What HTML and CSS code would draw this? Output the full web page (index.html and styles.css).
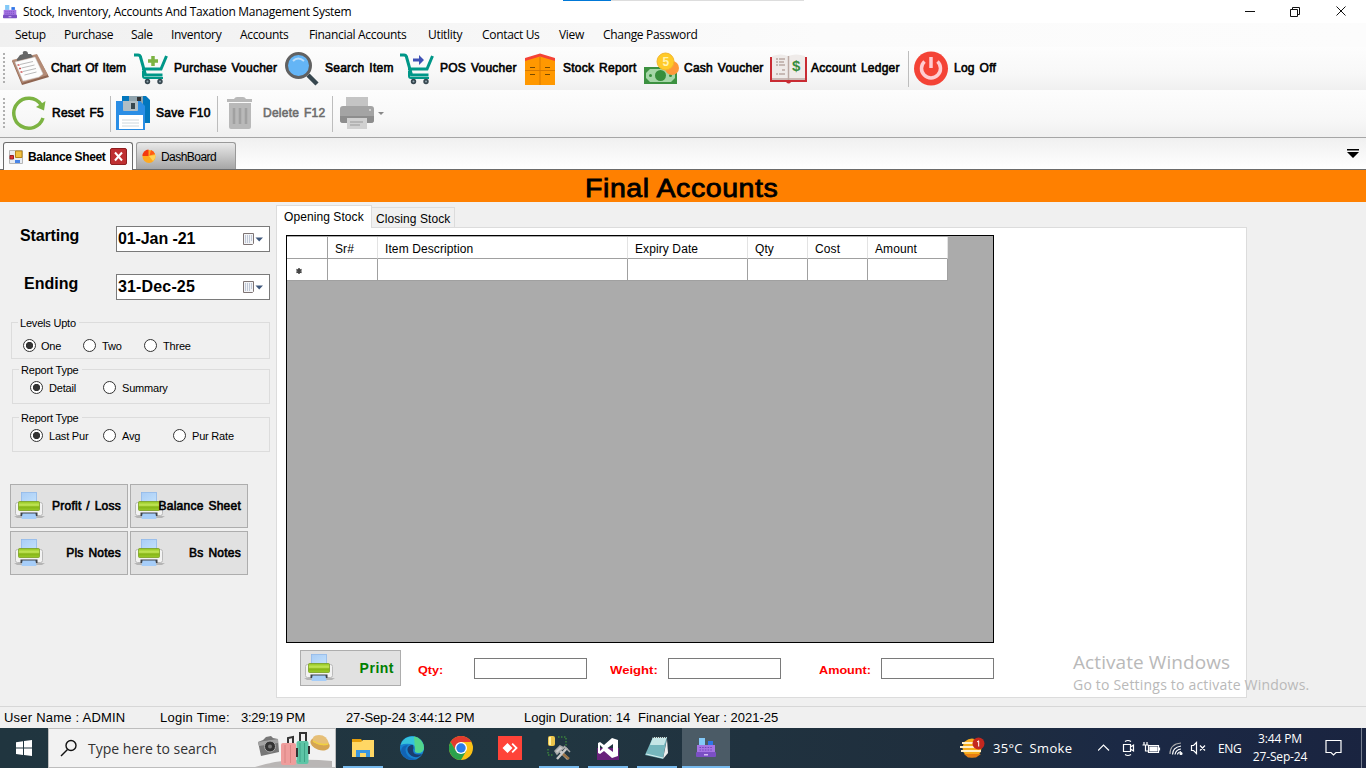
FILE: index.html
```html
<!DOCTYPE html>
<html lang="en">
<head>
<meta charset="utf-8">
<title>Stock, Inventory, Accounts And Taxation Management System</title>
<link rel="stylesheet" href="styles.css">
</head>
<body>
<svg class="sprite" width="0" height="0">
  <defs>
    <linearGradient id="lime" x1="0" y1="0" x2="0" y2="1"><stop offset="0" stop-color="#8fc31c"/><stop offset=".4" stop-color="#c5e85a"/><stop offset=".6" stop-color="#86b516"/><stop offset="1" stop-color="#9acb2a"/></linearGradient>
    <linearGradient id="sheet" x1="0" y1="0" x2="1" y2="1"><stop offset="0" stop-color="#a9cdf6"/><stop offset="1" stop-color="#c2e0fb"/></linearGradient>
  </defs>
  <symbol id="printer" viewBox="0 0 32 30">
    <path d="M0 25h31l-3 2H3z" fill="#b5b5b5"/>
    <rect x="1.500" y="11.500" width="27" height="13" rx="2" fill="#f2f2f2" stroke="#b4b4b4" stroke-width=".9"/>
    <rect x="7.500" y="1.500" width="15" height="10" fill="url(#sheet)" stroke="#8fb8ea" stroke-width=".8"/>
    <rect x="4.500" y="10.500" width="21" height="9" rx="1" fill="url(#lime)" stroke="#7a9e1f" stroke-width=".8"/>
    <rect x="6.500" y="21.500" width="17" height="3.500" fill="#3e4248"/>
    <path d="M8.500 22.500h13l1 5.500h-15z" fill="#a6cdf8"/>
  </symbol>
  <symbol id="cart" viewBox="0 0 36 36">
    <path d="M1 4h4q2 0 2.500 2l5 18h17M9 18h19L33.500 5" fill="none" stroke="#009788" stroke-width="3"/>
    <path d="M10 20v5q0 2 2 2h18" fill="none" stroke="#009788" stroke-width="2"/>
    <circle cx="14.500" cy="30.500" r="2.700" fill="#37474f"/><circle cx="27" cy="30.500" r="2.700" fill="#37474f"/>
    <circle cx="14.500" cy="30.500" r="1" fill="#90a4ae"/><circle cx="27" cy="30.500" r="1" fill="#90a4ae"/>
  </symbol>
  <symbol id="register" viewBox="0 0 20 20">
    <rect x="3" y="0" width="6" height="7" fill="#83c9f8"/><rect x="12" y="3" width="5" height="4" fill="#2f76e8"/>
    <path d="M1 7h18v8H1z" fill="#a575e3"/><rect x="0" y="14" width="20" height="5" rx="1" fill="#7b4fc4"/>
    <path d="M3.500 9.500h13M3.500 12h13" stroke="#7344bd" stroke-dasharray="1.500 1.200"/><rect x="8" y="16" width="4" height="1.500" fill="#d3bdf2"/>
  </symbol>
  <symbol id="cal" viewBox="0 0 22 14">
    <path d="M.5.500h10v10l-1 1h-9z" fill="#f3f4f6" stroke="#7e7474"/><path d="M2 3h7M2 5h7M2 7h7M2 9h6" stroke="#8d9cb8" stroke-dasharray="1 1"/><path d="M12.500 4.500h7.500L16.200 8.500z" fill="#40587c"/>
  </symbol>
</svg>

<header class="titlebar">
  <svg class="app-icon" width="14" height="14"><use href="#register"/></svg>
  <span class="app-title">Stock, Inventory, Accounts And Taxation Management System</span>
  <i class="loading"></i>
  <svg class="win-buttons" width="110" height="22" viewBox="0 0 110 22" fill="none" stroke="#111"><path d="M2 10.500h10M47.500 8.500h7v7h-7zM49.500 8.500v-2h7v7h-2M93.500 5.500l9 9M102.500 5.500l-9 9"/></svg>
</header>

<nav class="menu">
  <span class="m1">Setup</span><span class="m2">Purchase</span><span class="m3">Sale</span><span class="m4">Inventory</span><span class="m5">Accounts</span><span class="m6">Financial Accounts</span><span class="m7">Utitlity</span><span class="m8">Contact Us</span><span class="m9">View</span><span class="m10">Change Password</span>
</nav>

<div class="toolbar tools-main">
  <i class="grip"></i>
  <svg class="flush" width="38" height="37" viewBox="0 0 38 37"><path d="M1 11L26 5l12 22-27 8z" fill="#8f6551"/><path d="M1 10L26 4l11 21-26 8z" fill="#b38a75"/><path d="M4 12L24 7l8 17-4 3-16 4z" fill="#fdfdfd" stroke="#ccc" stroke-width=".5"/><path d="M9 14.500l13-3M10.500 18l13-3M12 21.500l13-3M13.500 25l12-3" stroke="#bbb"/><path d="M6.500 15h2M8 18.500h2M9.500 22h2" stroke="#c55" stroke-width="1.500"/><path d="M6 9l3-4 3-1q-1-3 2-3t3 3l3 0 2 3-16 4z" fill="#666"/></svg>
  <span class="t1">Chart Of Item</span>
  <svg width="36" height="36"><use href="#cart"/><path d="M20 5v10M15 10h10" stroke="#7cb342" stroke-width="3.500"/></svg>
  <span class="t2">Purchase Voucher</span>
  <svg width="36" height="36" viewBox="0 0 36 36"><path d="M24 24l9 9" stroke="#37474f" stroke-width="4.500"/><circle cx="14.500" cy="14.500" r="12" fill="#64b5f6" stroke="#616161" stroke-width="3"/><path d="M9 10q5-5 11 0" stroke="#bbdefb" stroke-width="2" fill="none"/></svg>
  <span class="t3">Search Item</span>
  <svg width="36" height="36"><use href="#cart"/><path d="M14 7.500h6V4l5 5-5 5v-3.500h-6z" fill="#3f51b5"/></svg>
  <span class="t4">POS Voucher</span>
  <svg class="flush" width="36" height="36" viewBox="0 0 36 36"><path d="M1 9L16 4l15 5v25H1z" fill="#ff9800"/><path d="M1 10V7L16 2.500 31 7v3L16 5.500z" fill="#f44336"/><path d="M1 19.500h30M16 6v28" stroke="#d77900"/><path d="M6 16.500h5M21 16.500h5M6 23.500h5M21 23.500h5" stroke="#7a4b00"/></svg>
  <span class="t5">Stock Report</span>
  <svg width="36" height="36" viewBox="0 0 36 36"><rect x="1" y="16" width="33" height="17" fill="#3c9140"/><path d="M7 18h21l4 4v5l-4 4H7l-4-4v-5z" fill="#a5d6a7"/><circle cx="17.500" cy="24.500" r="5.500" fill="#388e3c"/><circle cx="7.500" cy="24.500" r="1.500" fill="#388e3c"/><circle cx="27.500" cy="24.500" r="1.500" fill="#388e3c"/><circle cx="29" cy="17" r="7" fill="#ff9838"/><circle cx="22.500" cy="10.500" r="8.500" fill="#ffca28" stroke="#f3b52b"/><text x="19.500" y="15" class="coin">5</text></svg>
  <span class="t6">Cash Voucher</span>
  <svg class="flush" width="38" height="36" viewBox="0 0 38 36"><path d="M0 6h37v25H21q-2 3-5 0H0z" fill="#c92b33"/><path d="M2 5q9-3 16 0 8-3 17 0v24H2z" fill="#efebe9"/><path d="M18.500 5v24" stroke="#bcaaa4" stroke-width="1.500"/><path d="M2 28h33" fill="none" stroke="#bcaaa4" stroke-width="1.500"/><path d="M6 8h2m1 0h6M6 11h2m1 0h5M6 14h2m1 0h6M12 19h3M6 23h2m1 0h6" stroke="#bba9a3" stroke-width="1.300"/><text x="22" y="20" class="dollar">$</text></svg>
  <span class="t7">Account Ledger</span>
  <i class="sep"></i>
  <svg class="flush" width="36" height="36" viewBox="0 0 36 36"><circle cx="17" cy="17.500" r="17" fill="#f44336"/><path d="M10.500 10.500a9.500 9.500 0 1 0 13 0M17 6v11" stroke="#ffcdd2" stroke-width="3.500" fill="none"/></svg>
  <span class="t8">Log Off</span>
</div>

<div class="toolbar tools-edit">
  <i class="grip"></i>
  <svg width="36" height="36" viewBox="0 0 36 36"><path d="M32 23A15 15 0 1 1 30 9.500" fill="none" stroke="#7cb342" stroke-width="3.500"/><path d="M34.500 6L33 15.500 25 12z" fill="#7cb342"/></svg>
  <span class="e1">Reset F5</span>
  <i class="sep"></i>
  <svg width="36" height="36" viewBox="0 0 36 36"><path d="M7 1h24l4 4v23H7z" fill="#0277bd"/><path d="M14 1h14v8H14z" fill="#90a4ae"/><path d="M22 2h4v4h-4z" fill="#333"/><path d="M1 6h24l5 5v24H1z" fill="#2b8ee5"/><path d="M8 6h15v9q0 1-1 1H9q-1 0-1-1z" fill="#b0bec5"/><path d="M16 8h4v6h-4z" fill="#37474f"/><path d="M4 20h24v14H4z" fill="#fff"/><path d="M7 25h17M7 28h17M7 31h17" stroke="#cfd8dc"/></svg>
  <span class="e2">Save F10</span>
  <i class="sep"></i>
  <svg width="36" height="36" viewBox="0 0 36 36" fill="#b9b9b9"><path d="M2 4h7q1-2 3-2h6q2 0 3 2h6v3H2zM4 8h22v24q0 2-2 2H6q-2 0-2-2z"/><path d="M9 13v16M15 13v16M21 13v16" stroke="#a1a1a1" stroke-width="2.500"/></svg>
  <span class="e3">Delete F12</span>
  <i class="sep"></i>
  <svg width="36" height="36" viewBox="0 0 36 36"><path d="M7 2h22v13H7z" fill="#c4c4c4"/><rect x="1" y="11" width="34" height="17" rx="3" fill="#a4a4a4"/><path d="M1 21h34v4q0 3-3 3H4q-3 0-3-3z" fill="#8d8d8d"/><path d="M8 23h20v11H8z" fill="#d1d1d1"/><path d="M11 27h13M11 30h10" stroke="#999"/><circle cx="31" cy="15" r="1" fill="#ddd"/></svg>
  <svg width="8" height="8" viewBox="0 0 8 8"><path d="M1 3h6L4 6z" fill="#888"/></svg>
</div>

<div class="doc-tabs">
  <div class="doc-tab current">
    <svg width="14" height="14" viewBox="0 0 14 14"><path d="M.5.500h13v13H.5z" fill="#e8ecf2" stroke="#b7b7b7"/><path d="M6.500 1h6.500v6.500H6.500z" fill="#f0c040" stroke="#b78316"/><path d="M1 5.500h3.500V9H1z" fill="#d33" stroke="#922"/><path d="M6 10h5v3H6z" fill="#4a86e8"/></svg>
    <span class="d1">Balance Sheet</span>
    <svg width="17" height="17" viewBox="0 0 17 17"><rect x=".5" y=".5" width="16" height="16" rx="1.500" fill="#bf2f31" stroke="#8d1e20"/><path d="M5 4.500l7 8M12 4.500l-7 8" stroke="#fff" stroke-width="2"/></svg>
  </div>
  <div class="doc-tab">
    <svg width="14" height="14" viewBox="0 0 14 14"><circle cx="7" cy="7.500" r="6.500" fill="#ffa91f"/><path d="M6.500 7V.5a6.500 6.500 0 0 0-6 6.500z" fill="#f4380f"/><path d="M7.500 6.500L9 1a6 6 0 0 1 4 4z" fill="#ff5a16"/><path d="M7 7l6.500-1a7 7 0 0 1-2.500 6z" fill="#ffd25a"/></svg>
    <span class="d2">DashBoard</span>
  </div>
  <svg class="tab-list" width="12" height="9" viewBox="0 0 12 9"><path d="M0 0h12v1.500H0zM0 3h12L6 9z"/></svg>
</div>

<h1 class="banner"><span>Final Accounts</span></h1>

<main class="work">
  <aside class="side">
    <div class="date-row"><b class="s1">Starting</b><div class="date"><span class="s3">01-Jan -21</span><svg width="22" height="14"><use href="#cal"/></svg></div></div>
    <div class="date-row second"><b class="s2">Ending</b><div class="date"><span class="s4">31-Dec-25</span><svg width="22" height="14"><use href="#cal"/></svg></div></div>
    <fieldset class="levels"><legend>Levels Upto</legend><i class="radio on"></i><span>One</span><i class="radio"></i><span>Two</span><i class="radio"></i><span>Three</span></fieldset>
    <fieldset class="kind"><legend>Report Type</legend><i class="radio on"></i><span>Detail</span><i class="radio"></i><span>Summary</span></fieldset>
    <fieldset class="kind rate"><legend>Report Type</legend><i class="radio on"></i><span>Last Pur</span><i class="radio"></i><span>Avg</span><i class="radio"></i><span>Pur Rate</span></fieldset>
    <div class="reports">
      <div class="btn"><svg width="32" height="30"><use href="#printer"/></svg><span class="b1">Profit / Loss</span></div>
      <div class="btn"><svg width="32" height="30"><use href="#printer"/></svg><span class="b2">Balance Sheet</span></div>
      <div class="btn"><svg width="32" height="30"><use href="#printer"/></svg><span class="b3">Pls Notes</span></div>
      <div class="btn"><svg width="32" height="30"><use href="#printer"/></svg><span class="b4">Bs Notes</span></div>
    </div>
  </aside>
  <section class="stock">
    <div class="tabs"><div class="tab active"><span class="p1">Opening Stock</span></div><div class="tab"><span class="p2">Closing Stock</span></div></div>
    <div class="page">
      <div class="sheet">
        <div class="row head"><span></span><span>Sr#</span><span>Item Description</span><span>Expiry Date</span><span>Qty</span><span>Cost</span><span>Amount</span></div>
        <div class="row"><span><svg width="8" height="8" viewBox="0 0 8 8"><path d="M4 1v6M1.400 2.500l5.200 3M6.600 2.500l-5.200 3" stroke="#444" stroke-width="1.500"/></svg></span><span></span><span></span><span></span><span></span><span></span><span></span></div>
      </div>
      <div class="totals">
        <div class="print"><svg width="32" height="30"><use href="#printer"/></svg><span class="q0">Print</span></div>
        <label class="q1">Qty:</label><i class="box"></i>
        <label class="q2">Weight:</label><i class="box"></i>
        <label class="q3">Amount:</label><i class="box"></i>
      </div>
    </div>
  </section>
  <div class="watermark"><p class="w1">Activate Windows</p><p class="w2">Go to Settings to activate Windows.</p></div>
</main>

<footer class="status">
  <span class="f1">User Name : ADMIN</span><span class="f2">Login Time:</span><span class="f3">3:29:19 PM</span><span class="f4">27-Sep-24 3:44:12 PM</span><span class="f5">Login Duration: 14</span><span class="f6">Financial Year : 2021-25</span>
</footer>

<div class="taskbar">
  <div class="start"><svg width="16" height="16" viewBox="0 0 16 16"><path d="M0 2.200l7-1V7.600H0zM8 1l8-1v7.600H8zM0 8.600h7V15l-7-1zM8 8.600h8V16l-8-1.100z" fill="#fff"/></svg></div>
  <div class="search">
    <svg width="18" height="18" viewBox="0 0 18 18" fill="none" stroke="#111" stroke-width="1.400"><circle cx="11" cy="6.500" r="5"/><path d="M7.500 10.500L1 17"/></svg>
    <span class="k1">Type here to search</span>
    <svg class="travel" width="80" height="38" viewBox="0 0 80 38"><path d="M0 38q30-10 77-6v6z" fill="#b9b6b5"/><path d="M3 13l5-2 3-3 5-1 2 2 5 1 1 13-18 4z" fill="#777"/><path d="M3 13l20-3v4L4 17z" fill="#a3a3a3"/><circle cx="15" cy="17.500" r="5.500" fill="#333" stroke="#aaa"/><circle cx="15" cy="17.500" r="2" fill="#777"/><path d="M33 14V9l5-1v6M45 12V4h6v9" fill="none" stroke="#333" stroke-width="2"/><rect x="26" y="14" width="15" height="22" rx="2" fill="#ef9d9c"/><path d="M30 16v18M35.500 16v18" stroke="#d98482"/><rect x="41.500" y="12" width="12" height="23" rx="2" fill="#5dc5a6"/><path d="M45 14v19M49.500 14v19" stroke="#3ea487"/><path d="M42 19v9M54 17v8" stroke="#333" stroke-width="2"/><ellipse cx="65" cy="15" rx="10" ry="6" fill="#d5a552" transform="rotate(18 65 15)"/><path d="M58 13q-2-7 6-7t10 9q-7 3-16-2z" fill="#e6bf77"/><path d="M58 12q7 5 15 3" fill="none" stroke="#f1d13f" stroke-width="1.500"/></svg>
  </div>
  <div class="apps">
    <div class="app run"><svg width="24" height="24" viewBox="0 0 24 24"><path d="M1 3h9l2 3h-11z" fill="#e59f0c"/><path d="M1 6h9l2-2h11v17H1z" fill="#ffd764"/><path d="M5 21v-7h14v7h-4v-4H9v4z" fill="#3b97e0"/></svg></div>
    <div class="app"><svg width="24" height="24" viewBox="0 0 24 24"><circle cx="12" cy="12" r="12" fill="#1681cf"/><path d="M.5 9A12 12 0 0 1 24 12q0 5-6 5-4 0-3-3 1-5-4-6-6-1-10.500 1z" fill="#35c3dc"/><path d="M14 .3A12 12 0 0 1 24 12q-1 5-6 5-4-1-3-3z" fill="#5edb72" opacity=".75"/><path d="M8 9q-5 5 0 11 3 3 9 3A12 12 0 0 1 1 16Q1 9 8 9z" fill="#1263b4"/><path d="M11 9q-5 2-3 7 3 6 10 5 3-1 4-3-9 2-9-4 1-2 0-5z" fill="#1a3d70"/></svg></div>
    <div class="app"><svg width="24" height="24" viewBox="0 0 24 24"><circle cx="12" cy="12" r="12" fill="#fbc116"/><path d="M1.600 6A12 12 0 0 1 22.400 6H12L7 15z" fill="#e33b2e"/><path d="M1.600 6A12 12 0 0 0 12 24l5.200-9H7z" fill="#2ba24c"/><circle cx="12" cy="12" r="6" fill="#fff"/><circle cx="12" cy="12" r="4.700" fill="#2b7de9"/></svg></div>
    <div class="app"><svg width="24" height="24" viewBox="0 0 24 24"><path d="M0 0h24v24H0z" fill="#ff4338"/><path d="M9.500 7l5 5-5 5-5-5zM13.500 8.300l1.300-1.300 5 5-5 5-1.300-1.300 3.700-3.700z" fill="#fff"/></svg></div>
    <div class="app run"><svg width="24" height="24" viewBox="0 0 24 24"><rect x="1" y="0" width="7" height="10" rx="2" fill="#edc54b"/><path d="M2 1h2v8H2z" fill="#fff2a6"/><path d="M11 1h8v9M1 13v6h6" fill="none" stroke="#48a939" stroke-dasharray="1.500 1.500"/><path d="M10 23L20 12M11 13l10 10" stroke="#c8c8c8" stroke-width="2.500"/><path d="M8 15l5-5 4 2-4 3-3 3zM17 10l6 6" stroke="#aaa" fill="#ccc" stroke-width="1.500"/><path d="M16 18l6 5" stroke="#9a7448" stroke-width="2.500"/></svg></div>
    <div class="app run"><svg width="24" height="24" viewBox="0 0 24 24"><path d="M1 12h22v12H1z" fill="#68217a"/><path d="M16 2l6 2v16l-6 2-8-7-4 3-2-1V7l2-1 4 3zM17 8l-5.500 4 5.500 4zM4 9v6l3-3z" fill="#fff" fill-rule="evenodd"/></svg></div>
    <div class="app run"><svg width="24" height="24" viewBox="0 0 24 24"><path d="M8 1h14l-4 22-18-4z" fill="#76b6bd"/><path d="M8 1h14l-3 8H5z" fill="#c6e5e6"/><path d="M22 3l1 14-5 6z" fill="#eee"/><path d="M1 18l17 4" stroke="#d8eef0"/><path d="M8 1.500h14" stroke="#555" stroke-dasharray="1 1"/></svg></div>
    <div class="app active run"><svg width="20" height="20"><use href="#register"/></svg></div>
  </div>
  <div class="tray">
    <svg width="26" height="22" viewBox="0 0 26 22"><circle cx="12" cy="11" r="9.500" fill="#f6ad1d"/><path d="M2 6h16M0 10h18M1 14h20" stroke="#fff0c7" stroke-width="2"/><path d="M4 17h17l-5 3.500H8z" fill="#e67d12"/><circle cx="18.500" cy="6.500" r="6" fill="#c4281f"/><path d="M17 5l1.700-1.200V9.500" fill="none" stroke="#fff"/></svg>
    <span class="y1">35°C&ensp;Smoke</span>
    <svg width="112" height="22" viewBox="0 0 112 22" fill="none" stroke="#fff" stroke-width="1.200"><path d="M0 13.500L5.500 8l5.500 5.500"/><path d="M25.500 7.500h7v7h-7zM32.500 10l3-2v6l-3-2M27 4.500q3-2 6 0M27 17.500q3 2 6 0"/><path d="M50.500 8.500h10v7h-10zM61.500 10.500v3M46 5v3M49 5v3M44.500 8h6M47.500 8v6h3"/><path d="M52 10h7v4h-7z" fill="#fff"/><path d="M72 17q0-10 11-11" stroke="#aaa"/><path d="M74.500 17.500q0-7 8.500-8.500M77 17.500q1-5 6-5.500M79.500 17.500q0-2 3.500-3"/><circle cx="83" cy="16.500" r="1" fill="#fff"/><path d="M93.500 8.500h2l3-3v11l-3-3h-2zM102 8.500l5 5M107 8.500l-5 5"/></svg>
    <span class="y2">ENG</span>
    <div class="clock"><span class="y3">3:44 PM</span><span class="y4">27-Sep-24</span></div>
    <svg width="17" height="18" viewBox="0 0 17 18" fill="none" stroke="#fff" stroke-width="1.200"><path d="M1 1.500h15v12h-5L8.500 16 6 13.500H1z"/></svg>
    <i class="peek"></i>
  </div>
</div>
</body>
</html>
```
FILE: styles.css
```css
* { box-sizing: border-box; }
body { margin: 0; width: 1366px; height: 768px; overflow: hidden; display: flex; flex-direction: column; background: #f0f0f0; color: #000; font-family: "Liberation Sans", sans-serif; }
svg { display: block; flex: none; }
span, label, legend, b { white-space: nowrap; }
.sprite { position: absolute; }

.titlebar { height: 23px; flex: none; background: #fff; display: flex; align-items: center; padding-left: 3px; }
.app-title { width: 540px; margin-left: 6px; font: 12px "Open Sans", sans-serif; letter-spacing: -.28px; }
.loading { width: 241px; height: 1px; align-self: flex-start; background: linear-gradient(90deg, #0078d7 48px, #ddd 48px); }
.win-buttons { margin-left: auto; margin-right: 13px; }

.menu { height: 24px; flex: none; display: flex; align-items: center; padding: 0 0 1px 15px; gap: 19px; background: linear-gradient(90deg, #f0f0f0, #fbfbfb 60%, #fcfcfc); font: 12px "Open Sans", sans-serif; letter-spacing: -.32px; }
.menu span { flex: none; }
.m1 { width: 30px; } .m2 { width: 48px; } .m3 { width: 21px; } .m4 { width: 50px; } .m5 { width: 50px; }
.m6 { width: 100px; } .m7 { width: 35px; } .m8 { width: 58px; } .m9 { width: 25px; } .m10 { width: 94px; }

.toolbar { display: grid; align-items: center; flex: none; font-size: 12px; letter-spacing: .25px; word-spacing: 1.2px; -webkit-text-stroke: .6px currentColor; background: linear-gradient(#fdfdfd, #f8f8f8 60%, #f0f0f0); }
.toolbar span { padding-bottom: 2px; }
.toolbar text { -webkit-text-stroke: 0; }
.t1 { letter-spacing: .05px; }
.tools-main { height: 43px; grid-template-columns: 11px 40px 83px 40px 111px 40px 75px 40px 84px 39px 81px 40px 86px 41px 97px 6px 40px 60px; }
.tools-edit { height: 48px; grid-template-columns: 11px 41px 58px 5px 41px 61px 8px 38px 69px 7px 38px 10px; border-bottom: 1px solid #a6a6a6; }
.tools-main svg { margin-left: -1px; }
.tools-main .flush { margin-left: 0; }
.tools-edit svg { margin-bottom: 1px; }
.grip { width: 2px; height: 32px; margin-left: 3px; background: repeating-linear-gradient(#b0b0b0 0 2px, transparent 2px 4px); }
.sep { width: 1px; height: 36px; background: #bdbdbd; }
.coin { font: bold 12px "Liberation Sans", sans-serif; fill: #fff3b0; }
.dollar { font: bold 15px "Liberation Sans", sans-serif; fill: #388e3c; }
.e3 { color: #6d6d6d; }

.doc-tabs { height: 32px; flex: none; display: flex; align-items: flex-end; gap: 3px; padding-left: 3px; background: linear-gradient(#f0f0f0, #fff); border-bottom: 1px solid #6b6b6b; }
.doc-tab { width: 100px; height: 27px; display: flex; align-items: center; gap: 5px; padding-left: 5px; border: 1px solid #999; border-bottom: 0; border-radius: 3px 3px 0 0; background: linear-gradient(#e9e9e9, #a6a6a6); font-size: 12px; }
.doc-tab.current { width: 130px; height: 28px; margin-bottom: -1px; background: #fcfcfc; border-color: #6b6b6b; font-weight: bold; }
.d1 { width: 77px; letter-spacing: -.35px; }
.d2 { letter-spacing: -.55px; padding-top: 1px; }
.tab-list { margin: 0 7px 11px auto; }

.banner { height: 32px; flex: none; margin: 0; display: flex; align-items: center; padding: 3px 0 0 585px; background: #ff8000; font-size: 25px; font-weight: normal; letter-spacing: .5px; line-height: 30px; -webkit-text-stroke: .8px #000; }
.banner span { transform: scaleX(1.14); transform-origin: 0 50%; }

.work { height: 503px; flex: none; display: flex; position: relative; }
.side { width: 276px; flex: none; padding: 24px 0 0 10px; }
.date-row { height: 26px; display: flex; width: 260px; font-size: 16px; }
.date-row b { width: 106px; height: 21px; line-height: 20px; padding-left: 10px; }
.s1 { letter-spacing: -.15px; }
.second { margin-top: 22px; }
.second b { padding-left: 14px; }
.date { width: 154px; height: 26px; flex: none; display: flex; align-items: center; justify-content: space-between; border: 1px solid #7a7a7a; background: #fff; padding: 0 4px 0 1px; font-weight: bold; }
.s3 { letter-spacing: -.1px; }
.s4 { letter-spacing: .15px; }
.date svg { margin-top: 2px; }
fieldset { margin: 4px 0 0 2px; padding: 0; width: 258px; height: 41px; min-width: 0; border: 1px solid #dcdcdc; display: flex; align-items: center; letter-spacing: -.2px; }
fieldset span, legend { font-size: 11px; }
legend { padding: 1px 3px 0 2px; height: 13px; line-height: 13px; }
fieldset span { padding-left: 6px; }
.levels { margin: 16px 0 0 1px; width: 259px; height: 43px; padding: 4px 0 0 11px; }
.levels legend { margin-left: -5px; }
.levels span { width: 47px; padding-left: 5px; }
.levels span:nth-of-type(n+2) { width: 48px; padding-left: 6px; }
.kind { padding: 0 0 4px 17px; }
.kind legend { margin-left: -11px; }
.kind span { width: 60px; }
.rate { margin-top: 7px; }
.rate span:nth-of-type(2) { width: 57px; }
.radio { width: 13px; height: 13px; flex: none; border: 1px solid #333; border-radius: 50%; background: #fff; }
.radio.on { background: radial-gradient(circle, #333 0 3.300px, #fff 4px); }
.reports { margin-top: 32px; display: grid; grid-template-columns: 118px 118px; gap: 3px 2px; }
.btn, .print { height: 44px; display: flex; align-items: center; justify-content: flex-end; border: 1px solid #adadad; background: #e1e1e1; padding-right: 6px; }
.btn { font-size: 12px; letter-spacing: .25px; word-spacing: 1.200px; -webkit-text-stroke: .6px #000; }
.btn svg { margin-left: 3px; margin-right: auto; }
.b2 { margin-left: -14px; }

.stock { width: 971px; flex: none; padding-top: 4px; }
.tabs { height: 21px; display: flex; align-items: flex-end; font-size: 12px; letter-spacing: .08px; }
.tab { width: 83px; height: 20px; padding: 4px 0 0 4px; border: 1px solid #dcdcdc; border-bottom: 0; border-left: 0; background: #f0f0f0; }
.tab.active { width: 96px; height: 23px; margin-bottom: -1px; padding: 4px 0 0 7px; background: #fff; border-left: 1px solid #dcdcdc; position: relative; z-index: 1; }
.page { height: 471px; border: 1px solid #dcdcdc; background: #fff; padding: 7px 9px; }
.sheet { width: 708px; height: 408px; background: #ababab; border: 1px solid #000; padding-top: 1px; }
.row { display: grid; grid-template-columns: 41px 50px 250px 120px 60px 60px 80px; grid-template-rows: 22px; width: 661px; height: 22px; font-size: 12px; letter-spacing: .1px; line-height: 24px; background: #fff; }
.row span { border-right: 1px solid #a0a0a0; border-bottom: 1px solid #a0a0a0; padding-left: 7px; }
.row.head span { border-right-color: #e3e3e3; }
.row.head span:first-child { border-right-color: #a0a0a0; }
.row svg { margin: 8px 0 0 1px; }
.totals { margin: 7px 0 0 14px; display: grid; align-items: center; grid-template-columns: 118px 56px 136px 58px 151px 62px 113px; font-size: 12px; font-weight: bold; color: #f00; }
.totals label { padding-top: 3px; font-size: 11.500px; transform: scaleX(1.1); transform-origin: 0 50%; }
.totals .q2 { transform: scaleX(1.14); }
.q1 { margin-right: auto; }
.print { width: 101px; height: 36px; color: #007f00; font-size: 14px; letter-spacing: .5px; }
.print svg { margin: 0 auto 0 3px; }
.print span { padding-bottom: 1px; }
.box { width: 113px; height: 21px; background: #fff; border: 1px solid #7a7a7a; }
.watermark { position: absolute; left: 1073px; top: 448px; color: #b9b9b9; font-family: "Open Sans", sans-serif; white-space: nowrap; }
.watermark p { margin: 0; }
.w1 { font-size: 19px; line-height: 24px; letter-spacing: .08px; }
.w2 { font-size: 14px; line-height: 22px; letter-spacing: .2px; }

.status { height: 22px; flex: none; border-top: 1px solid #d7d7d7; margin-top: 1px; display: grid; grid-template-columns: 156px 81px 105px 178px 114px 200px; padding-left: 4px; font-size: 13px; line-height: 21px; }
.f1 { letter-spacing: .22px; }
.f2 { letter-spacing: .25px; }
.f3 { letter-spacing: -.25px; }
.f4 { letter-spacing: -.12px; }

.taskbar { height: 40px; flex: none; display: flex; color: #fff; background: linear-gradient(90deg, #20353f, #213641 40%, #1f2e3d 70%, #1b2945 82%, #1a2440); }
.start { width: 48px; display: flex; align-items: center; justify-content: center; }
.search { width: 288px; height: 40px; display: flex; align-items: center; background: #f2f2f2; border: 1px solid #bdbdbd; padding-left: 11px; color: #333; font: 14px "Open Sans", sans-serif; }
.k1 { width: 160px; margin-left: 10px; }
.travel { margin-left: 13px; }
.apps { display: flex; padding-left: 3px; }
.app { width: 49px; height: 40px; padding-right: 2px; display: flex; align-items: center; justify-content: center; background: linear-gradient(#76b9ed, #76b9ed) no-repeat 4px 38px / 0 2px; }
.app.run { background-size: 40px 2px; }
.app.active { width: 48px; padding: 0; background-color: #4b5b66; background-position: 0 38px; background-size: 48px 2px; }
.tray { margin-left: auto; width: 406px; display: grid; align-items: center; grid-template-columns: 33px 105px 120px 27px 70px 36px 1px; font: 13px "Open Sans", sans-serif; }
.y1 { letter-spacing: .3px; }
.y2 { font-size: 12px; letter-spacing: -.3px; }
.clock { display: flex; flex-direction: column; align-items: center; font-size: 12px; line-height: 18px; letter-spacing: -.15px; }
.tray > svg:nth-of-type(3) { margin-left: 10px; }
.peek { width: 1px; height: 40px; margin-left: 10px; background: #777f90; }
```
